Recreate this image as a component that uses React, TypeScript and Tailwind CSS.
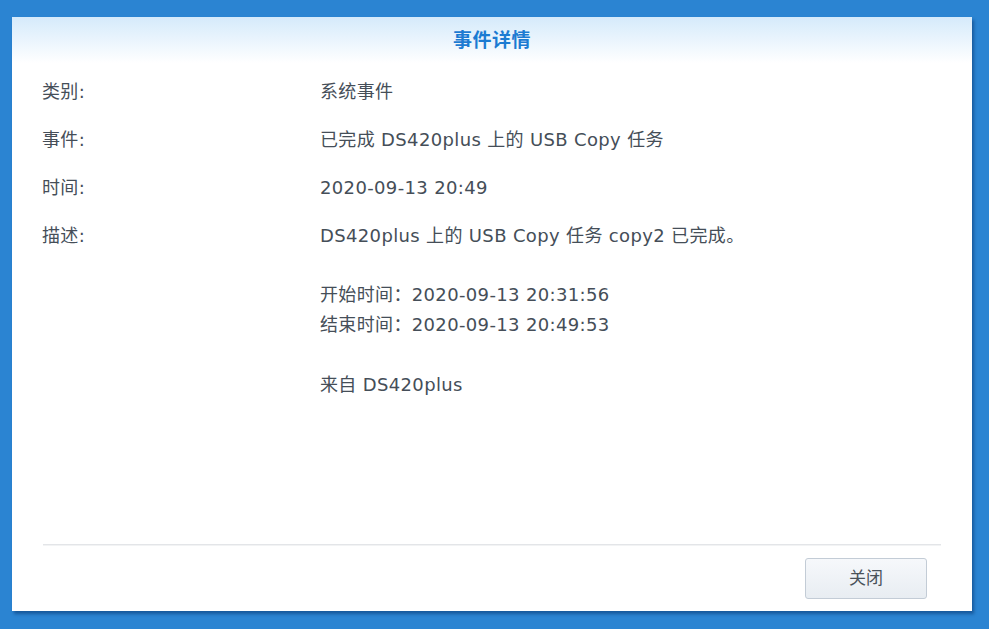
import React from 'react';

const rows: { label: string; value: React.ReactNode }[] = [
  { label: '类别:', value: '系统事件' },
  { label: '事件:', value: '已完成 DS420plus 上的 USB Copy 任务' },
  { label: '时间:', value: '2020-09-13 20:49' },
];

const EventDetail: React.FC = () => {
  return (
    <div
      className="w-[989px] h-[629px] bg-[#2b84d2] pt-[17px] pl-[12px] overflow-hidden"
      style={{ fontFamily: '"DejaVu Sans", "Noto Sans CJK SC", sans-serif' }}
    >
      <div className="w-[960px] h-[594px] bg-white flex flex-col shadow-[2px_3px_3px_rgba(10,60,120,0.6)]">
        {/* Header */}
        <div className="h-[46px] flex items-center justify-center bg-gradient-to-b from-[#d5eafb] to-white">
          <h1 className="text-[19px] font-bold text-[#1c7bd2] tracking-[0.5px]">事件详情</h1>
        </div>

        {/* Body */}
        <div className="flex-1 px-[30px] pt-[4px] text-[18px] tracking-[0.35px] text-[#454e58]">
          {rows.map((row) => (
            <div key={row.label} className="flex h-[48px] items-center">
              <div className="w-[278px] shrink-0">{row.label}</div>
              <div>{row.value}</div>
            </div>
          ))}
          <div className="flex pt-[15px]">
            <div className="w-[278px] shrink-0 leading-[20px]">描述:</div>
            <div className="leading-[30px] -mt-[5px]">
              <div>DS420plus 上的 USB Copy 任务 copy2 已完成。</div>
              <div className="h-[29px]" />
              <div>开始时间：2020-09-13 20:31:56</div>
              <div>结束时间：2020-09-13 20:49:53</div>
              <div className="h-[30px]" />
              <div>来自 DS420plus</div>
            </div>
          </div>
        </div>

        {/* Footer */}
        <div className="px-[31px]">
          <div className="h-[2px] bg-[#e3e5e8] border-b border-[#f2f3f4]" />
          <div className="flex justify-end pt-[12px] pb-[12px] pr-[14px]">
            <button className="w-[122px] h-[41px] rounded-[3px] border border-[#c3ccd6] bg-gradient-to-b from-[#f6f8fb] to-[#e8edf2] text-[17px] text-[#4a525a]">
              关闭
            </button>
          </div>
        </div>
      </div>
    </div>
  );
};

export default function App() {
  return <EventDetail />;
}
